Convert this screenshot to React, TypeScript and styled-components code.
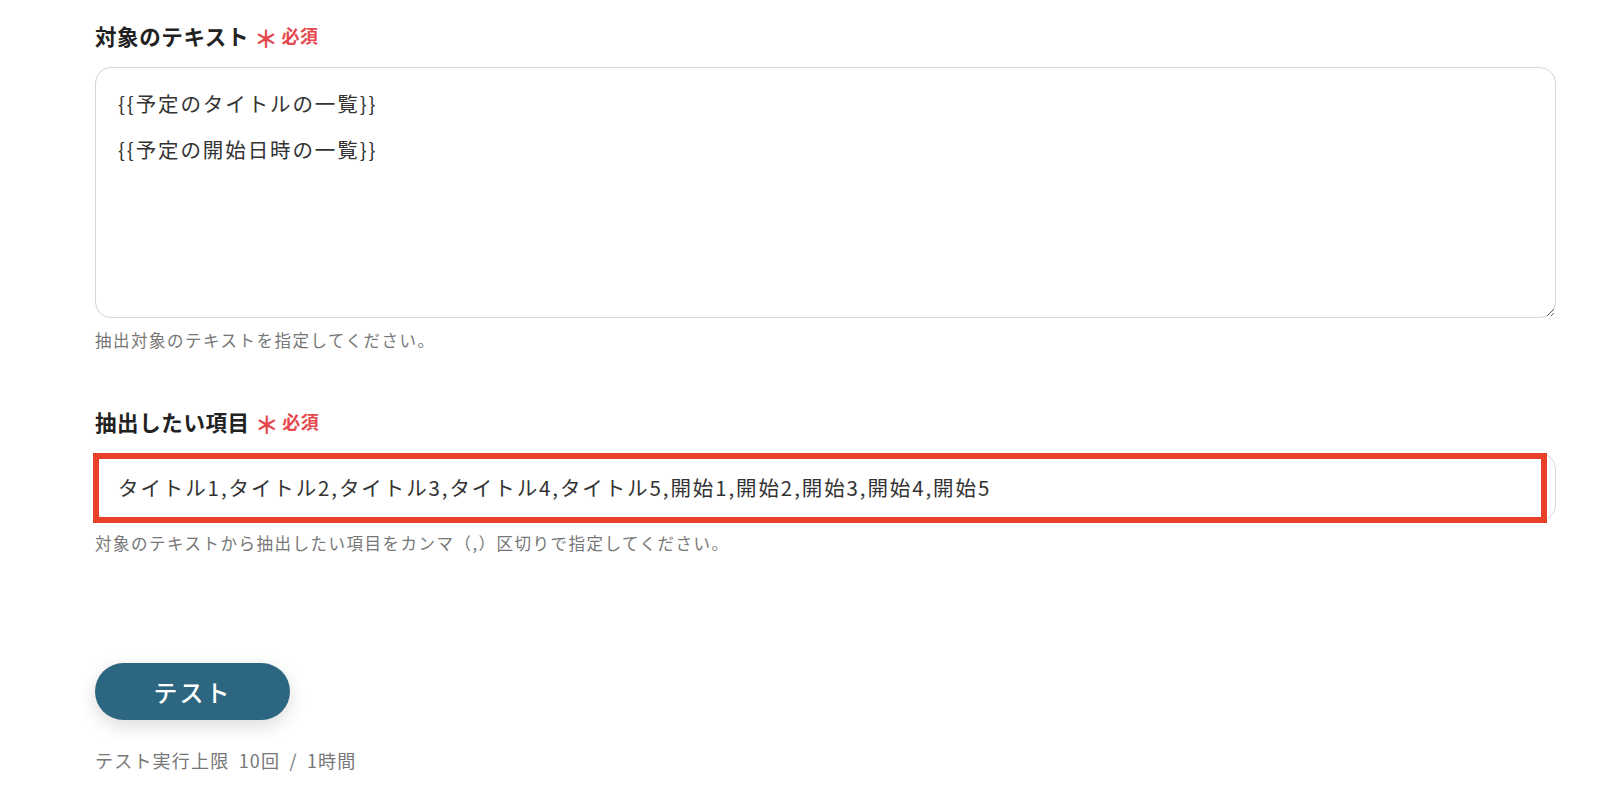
import React from "react";
import styled, { createGlobalStyle } from "styled-components";

const Global = createGlobalStyle`
  html, body { margin: 0; padding: 0; background: #fff; }
  body { font-family: "Noto Sans CJK JP", "Noto Sans", sans-serif; color: #333; }
`;

const Page = styled.div`
  padding: 20px 44px 40px 95px;
  display: flex;
  flex-direction: column;
`;

const Field = styled.section<{ $gap: number }>`
  display: flex;
  flex-direction: column;
  margin-bottom: ${(p) => p.$gap}px;
`;

const Label = styled.div`
  display: flex;
  align-items: center;
  gap: 5px;
  height: 30px;
  font-size: 21.5px;
  font-weight: 700;
  letter-spacing: 0.6px;
  color: #222;
  margin-bottom: 17px;
`;

const Required = styled.span`
  color: #e5484d;
  font-size: 18px;
  font-weight: 700;
  letter-spacing: 0.5px;
  display: flex;
  align-items: center;
  gap: 3px;
`;

const Star = styled.span`
  font-size: 24px;
  line-height: 1;
  position: relative;
  top: 3px;
`;

const TextArea = styled.textarea`
  box-sizing: border-box;
  width: 100%;
  height: 251px;
  border: 1.5px solid #d3d7de;
  border-radius: 16px;
  padding: 12px 22px;
  font-family: "Noto Sans CJK JP", sans-serif;
  font-size: 20.5px;
  letter-spacing: 1.9px;
  line-height: 46px;
  color: #333;
  resize: vertical;
  outline: none;
  margin: 0;
`;

const InputWrap = styled.div`
  position: relative;
`;

const Input = styled.input`
  box-sizing: border-box;
  width: 100%;
  height: 68px;
  border: 1.5px solid #d3d7de;
  border-radius: 16px;
  padding: 0 22px;
  font-family: "Noto Sans CJK JP", sans-serif;
  font-size: 20.5px;
  letter-spacing: 1.9px;
  color: #333;
  outline: none;
  margin: 0;
  display: block;
`;

const Highlight = styled.div`
  position: absolute;
  left: -2px;
  top: 0;
  right: 9px;
  bottom: -2px;
  border: 6px solid #e8412a;
  pointer-events: none;
`;

const Help = styled.div`
  font-size: 16.5px;
  letter-spacing: 1.5px;
  color: #777;
  margin-top: 10px;
  line-height: 24px;
`;

const Button = styled.button`
  width: 195px;
  height: 57px;
  border: none;
  border-radius: 29px;
  background: #2d6680;
  color: #fff;
  font-family: "Noto Sans CJK JP", sans-serif;
  font-size: 24px;
  font-weight: 500;
  letter-spacing: 2px;
  box-shadow: 0 6px 18px rgba(0, 0, 0, 0.14);
  cursor: pointer;
  align-self: flex-start;
`;

const Limit = styled.div`
  font-size: 18px;
  letter-spacing: 1.2px;
  word-spacing: 4px;
  color: #777;
  margin-top: 28px;
  line-height: 24px;
`;

const RequiredMark = () => (
  <Required>
    <Star>＊</Star>必須
  </Required>
);

export default function App() {
  return (
    <>
      <Global />
      <Page>
        <Field $gap={54}>
          <Label>
            対象のテキスト
            <RequiredMark />
          </Label>
          <TextArea defaultValue={"{{予定のタイトルの一覧}}\n{{予定の開始日時の一覧}}"} />
          <Help>抽出対象のテキストを指定してください。</Help>
        </Field>
        <Field $gap={108}>
          <Label>
            抽出したい項目
            <RequiredMark />
          </Label>
          <InputWrap>
            <Input defaultValue="タイトル1,タイトル2,タイトル3,タイトル4,タイトル5,開始1,開始2,開始3,開始4,開始5" />
            <Highlight />
          </InputWrap>
          <Help>対象のテキストから抽出したい項目をカンマ（,）区切りで指定してください。</Help>
        </Field>
        <Button>テスト</Button>
        <Limit>テスト実行上限 10回 / 1時間</Limit>
      </Page>
    </>
  );
}
